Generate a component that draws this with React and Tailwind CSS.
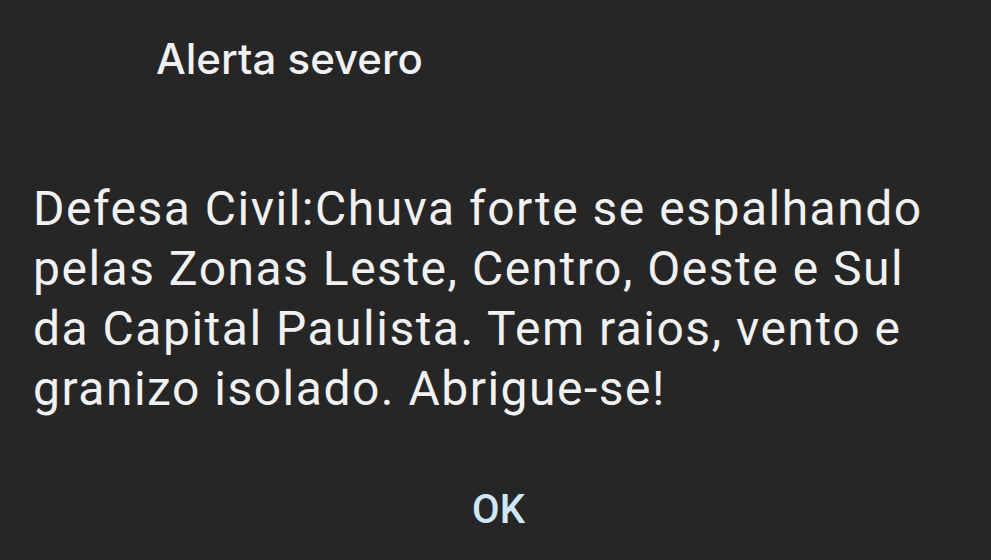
const lines = [
  'Defesa Civil:Chuva forte se espalhando',
  'pelas Zonas Leste, Centro, Oeste e Sul',
  'da Capital Paulista. Tem raios, vento e',
  'granizo isolado. Abrigue-se!',
];

export default function App() {
  return (
    <div className="w-[991px] h-[560px] bg-[#262626] text-[#f1f1f3] flex flex-col overflow-hidden" style={{ fontFamily: 'Roboto, "Noto Sans", sans-serif' }}>
      <h1 className="pl-[156px] pt-[35px] text-[42px] leading-[48px] font-medium" style={{ fontFamily: 'Inter, Roboto, sans-serif' }}>
        Alerta severo
      </h1>
      <div className="pl-[33px] mt-[96px] text-[48px] leading-[60px] tracking-[1.5px]">
        {lines.map((l) => (
          <p key={l} className="whitespace-nowrap">{l}</p>
        ))}
      </div>
      <div className="mt-[67px] flex justify-center">
        <button className="pl-[6px] text-[40px] leading-[48px] font-medium text-[#cde8f8]">OK</button>
      </div>
    </div>
  );
}
